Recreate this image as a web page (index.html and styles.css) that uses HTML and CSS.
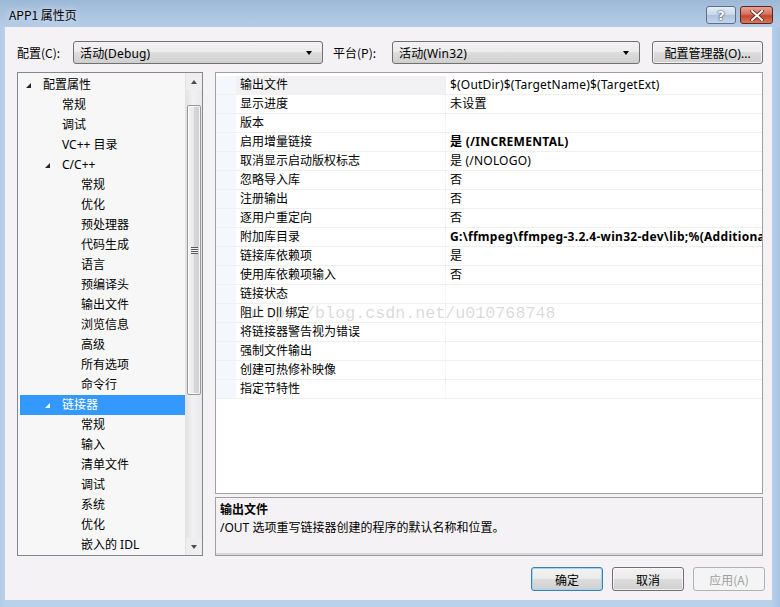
FILE: index.html
```html
<!DOCTYPE html>
<html lang="zh-CN">
<head>
<meta charset="utf-8">
<title>APP1 属性页</title>
<link rel="stylesheet" href="styles.css">
</head>
<body>
<div class="window">
  <div class="titlebar">
    <span class="title">APP1 属性页</span>
    <div class="caption-btns">
      <div class="cbtn help">?</div>
      <div class="cbtn close">
        <svg width="14" height="11" viewBox="0 0 14 11"><path d="M2 1 L12 10 M12 1 L2 10" stroke="#5a1a14" stroke-width="3.4" stroke-linecap="square"/><path d="M2 1 L12 10 M12 1 L2 10" stroke="#ffffff" stroke-width="2" stroke-linecap="square"/></svg>
      </div>
    </div>
  </div>
  <div class="client">
    <div class="toolbar">
      <span class="lbl lbl-cfg">配置(C):</span>
      <div class="combo combo-cfg"><span>活动(Debug)</span><i class="drop"></i></div>
      <span class="lbl lbl-plat">平台(P):</span>
      <div class="combo combo-plat"><span>活动(Win32)</span><i class="drop"></i></div>
      <div class="btn btn-mgr">配置管理器(O)...</div>
    </div>
    <div class="main">
      <div class="tree">
        <div class="tree-list">
          <div class="node l0"><i class="arr"></i>配置属性</div>
          <div class="node l1">常规</div>
          <div class="node l1">调试</div>
          <div class="node l1">VC++ 目录</div>
          <div class="node l1"><i class="arr"></i>C/C++</div>
          <div class="node l2">常规</div>
          <div class="node l2">优化</div>
          <div class="node l2">预处理器</div>
          <div class="node l2">代码生成</div>
          <div class="node l2">语言</div>
          <div class="node l2">预编译头</div>
          <div class="node l2">输出文件</div>
          <div class="node l2">浏览信息</div>
          <div class="node l2">高级</div>
          <div class="node l2">所有选项</div>
          <div class="node l2">命令行</div>
          <div class="node l1 sel"><i class="arr"></i>链接器</div>
          <div class="node l2">常规</div>
          <div class="node l2">输入</div>
          <div class="node l2">清单文件</div>
          <div class="node l2">调试</div>
          <div class="node l2">系统</div>
          <div class="node l2">优化</div>
          <div class="node l2">嵌入的 IDL</div>
        </div>
        <div class="vscroll">
          <div class="sbtn up"><i></i></div>
          <div class="track">
            <div class="pre"></div>
            <div class="thumb"><span class="grip"></span></div>
          </div>
          <div class="sbtn down"><i></i></div>
        </div>
      </div>
      <div class="right">
        <div class="grid">
          <div class="row first"><span class="gut"></span><span class="name">输出文件</span><span class="val">$(OutDir)$(TargetName)$(TargetExt)</span></div>
          <div class="row"><span class="gut"></span><span class="name">显示进度</span><span class="val">未设置</span></div>
          <div class="row"><span class="gut"></span><span class="name">版本</span><span class="val"></span></div>
          <div class="row"><span class="gut"></span><span class="name">启用增量链接</span><span class="val b">是 (/INCREMENTAL)</span></div>
          <div class="row"><span class="gut"></span><span class="name">取消显示启动版权标志</span><span class="val">是 (/NOLOGO)</span></div>
          <div class="row"><span class="gut"></span><span class="name">忽略导入库</span><span class="val">否</span></div>
          <div class="row"><span class="gut"></span><span class="name">注册输出</span><span class="val">否</span></div>
          <div class="row"><span class="gut"></span><span class="name">逐用户重定向</span><span class="val">否</span></div>
          <div class="row"><span class="gut"></span><span class="name">附加库目录</span><span class="val b">G:\ffmpeg\ffmpeg-3.2.4-win32-dev\lib;%(AdditionalLibraryDirectories)</span></div>
          <div class="row"><span class="gut"></span><span class="name">链接库依赖项</span><span class="val">是</span></div>
          <div class="row"><span class="gut"></span><span class="name">使用库依赖项输入</span><span class="val">否</span></div>
          <div class="row"><span class="gut"></span><span class="name">链接状态</span><span class="val"></span></div>
          <div class="row"><span class="gut"></span><span class="name">阻止 Dll 绑定</span><span class="val"></span></div>
          <div class="row"><span class="gut"></span><span class="name">将链接器警告视为错误</span><span class="val"></span></div>
          <div class="row"><span class="gut"></span><span class="name">强制文件输出</span><span class="val"></span></div>
          <div class="row"><span class="gut"></span><span class="name">创建可热修补映像</span><span class="val"></span></div>
          <div class="row"><span class="gut"></span><span class="name">指定节特性</span><span class="val"></span></div>
          <div class="watermark">http://blog.csdn.net/u010768748</div>
        </div>
        <div class="desc">
          <div class="desc-title">输出文件</div>
          <div class="desc-text">/OUT 选项重写链接器创建的程序的默认名称和位置。</div>
        </div>
      </div>
    </div>
    <div class="footer">
      <div class="btn dlg focus">确定</div>
      <div class="btn dlg">取消</div>
      <div class="btn dlg disabled">应用(A)</div>
    </div>
  </div>
</div>
</body>
</html>
```

FILE: styles.css
```css
* { box-sizing: border-box; }
html, body { margin: 0; padding: 0; }
body {
  width: 780px;
  height: 607px;
  overflow: hidden;
  font-family: "Segoe UI", "Noto Sans", "Noto Sans CJK SC", sans-serif;
  font-size: 12px;
  color: #000;
}
.window {
  width: 780px;
  height: 607px;
  background: linear-gradient(to right, #b3cbe7 0px, #bad1ea 6px, #bad1ea 770px, #a9c4e4 780px);
  display: flex;
  flex-direction: column;
}
.titlebar {
  height: 27px;
  flex: none;
  display: flex;
  align-items: flex-start;
  background: linear-gradient(to bottom, #9db8d7 0%, #a8c1de 40%, #b5cce8 100%);
  position: relative;
}
.title {
  font-family: "Noto Sans CJK SC", sans-serif;
  font-size: 12px;
  line-height: 14px;
  padding: 8px 0 0 9px;
  color: #000;
  text-shadow: 0 0 6px rgba(255,255,255,0.9);
}
.caption-btns {
  margin-left: auto;
  margin-right: 7px;
  margin-top: 6px;
  display: flex;
  gap: 4px;
}
.cbtn {
  height: 18px;
  border: 1px solid #5f6f86;
  border-radius: 3px;
  display: flex;
  align-items: center;
  justify-content: center;
}
.help {
  width: 30px;
  background: linear-gradient(to bottom, #e6eef8 0%, #c8d7ea 48%, #aec2dc 52%, #c4d6ec 100%);
  color: #fff;
  font-family: "DejaVu Sans", sans-serif;
  font-weight: bold;
  font-size: 13px;
  text-shadow: 0 0 2px #2a3c58, 0 0 1px #2a3c58;
}
.close {
  width: 33px;
  border-color: #5c2620;
  background: linear-gradient(to bottom, #e8a394 0%, #d4735f 45%, #c0472d 55%, #d6795c 100%);
}
.client {
  flex: none;
  margin-left: 5px;
  width: 767px;
  height: 573px;
  background: #f5f2f5;
  display: flex;
  flex-direction: column;
}
.toolbar {
  display: flex;
  align-items: center;
  height: 23px;
  margin-top: 14px;
  padding-left: 12px;
}
.lbl {
  font-family: "Noto Sans CJK SC", sans-serif;
  font-size: 12px;
  flex: none;
}
.lbl-cfg { width: 56px; }
.lbl-plat { width: 59px; margin-left: 10px; }
.combo {
  height: 23px;
  border: 1px solid #707070;
  border-radius: 3px;
  background: linear-gradient(to bottom, #f2f2f2 0%, #ebebeb 50%, #dddddd 50%, #cfcfcf 100%);
  display: flex;
  align-items: center;
  padding-left: 6px;
  position: relative;
  font-size: 12px;
}
.combo span { font-family: "Noto Sans", "Noto Sans CJK SC", sans-serif; letter-spacing: 0.15px; }
.combo-cfg { width: 250px; }
.combo-plat { width: 248px; }
.drop {
  position: absolute;
  right: 10px;
  top: 9px;
  width: 0;
  height: 0;
  border-left: 3.5px solid transparent;
  border-right: 3.5px solid transparent;
  border-top: 4px solid #000;
}
.btn {
  height: 24px;
  border: 1px solid #707070;
  border-radius: 3px;
  background: linear-gradient(to bottom, #f2f2f2 0%, #ebebeb 50%, #dddddd 50%, #cfcfcf 100%);
  display: flex;
  align-items: center;
  justify-content: center;
  font-size: 12px;
  box-shadow: inset 0 0 0 1px rgba(255,255,255,0.7);
}
.btn-mgr {
  width: 111px;
  height: 23px;
  margin-left: 12px;
}
.main {
  display: flex;
  margin-top: 8px;
  padding-left: 12px;
  height: 484px;
}
.tree {
  width: 186px;
  height: 484px;
  border: 1px solid #828790;
  background: #f7f7f7;
  display: flex;
  flex: none;
}
.tree-list {
  flex: 1;
  padding-top: 2px;
  overflow: hidden;
}
.node {
  height: 20px;
  line-height: 20px;
  margin-left: 2px;
  position: relative;
  font-family: "Noto Sans", "Noto Sans CJK SC", sans-serif;
  font-size: 12px;
  white-space: nowrap;
}
.node.l0 { padding-left: 23px; }
.node.l1 { padding-left: 42px; }
.node.l2 { padding-left: 61px; }
.arr {
  position: absolute;
  top: 8px;
  width: 0;
  height: 0;
  border-left: 5px solid transparent;
  border-bottom: 5px solid #262626;
}
.l0 .arr { left: 6px; }
.l1 .arr { left: 25px; }
.node.sel {
  background: #3399ff;
  color: #fff;
}
.node.sel .arr { border-bottom-color: #fff; }
.vscroll {
  width: 17px;
  flex: none;
  display: flex;
  flex-direction: column;
  background: #eeeeee;
  border-left: 1px solid #e2e2e2;
}
.sbtn {
  height: 17px;
  flex: none;
  display: flex;
  align-items: center;
  justify-content: center;
}
.sbtn i {
  width: 0;
  height: 0;
  border-left: 3.5px solid transparent;
  border-right: 3.5px solid transparent;
}
.sbtn.up i { border-bottom: 4px solid #4d4d4d; }
.sbtn.down i { border-top: 4px solid #4d4d4d; }
.track {
  flex: 1;
  display: flex;
  flex-direction: column;
  background: linear-gradient(to right, #e3e3e3, #f0f0f0 40%, #f0f0f0 60%, #e8e8e8);
}
.pre { height: 15px; flex: none; }
.thumb {
  height: 290px;
  flex: none;
  margin: 0 1px;
  border: 1px solid #979797;
  border-radius: 2px;
  background: linear-gradient(to right, #f3f3f3 0%, #e9e9e9 50%, #d6d6d6 51%, #d0d0d0 100%);
  box-shadow: inset 0 0 0 1px rgba(255,255,255,0.8);
  display: flex;
  align-items: center;
  justify-content: center;
}
.grip {
  width: 7px;
  height: 7px;
  background: repeating-linear-gradient(to bottom, #595959 0px, #595959 1px, #f0f0f0 1px, #f0f0f0 2px);
}
.right {
  margin-left: 12px;
  width: 548px;
  display: flex;
  flex-direction: column;
  flex: none;
}
.grid {
  height: 422px;
  border: 1px solid #a0a0a0;
  background: #fff;
  padding-top: 3px;
  position: relative;
  overflow: hidden;
  flex: none;
}
.row {
  display: flex;
  height: 19px;
  border-bottom: 1px solid #f0f0f0;
  font-family: "Noto Sans", "Noto Sans CJK SC", sans-serif;
  font-size: 12px;
  line-height: 18px;
  white-space: nowrap;
}
.gut {
  width: 20px;
  flex: none;
  background: #f5f7ff;
}
.name {
  width: 210px;
  flex: none;
  padding-left: 4px;
  border-right: 1px dotted #ececec;
}
.row.first .name { background: #f2f2f4; }
.val {
  flex: 1;
  padding-left: 4px;
  overflow: hidden;
  letter-spacing: 0.2px;
}
.val.b { font-weight: bold; letter-spacing: 0.3px; }
.watermark {
  position: absolute;
  left: 29px;
  top: 231px;
  font-family: "Liberation Mono", monospace;
  font-size: 16.7px;
  color: rgba(120,120,120,0.28);
  pointer-events: none;
  white-space: nowrap;
}
.desc {
  margin-top: 3px;
  height: 60px;
  border: 1px solid #a0a0a0;
  border-bottom-color: #9a9a9a;
  box-shadow: inset 0 -2px 0 #d8d8d8;
  background: #f5f2f5;
  padding: 3px 0 0 4px;
  font-family: "Noto Sans", "Noto Sans CJK SC", sans-serif;
  font-size: 12px;
}
.desc-title {
  font-weight: bold;
  line-height: 18px;
}
.desc-text {
  line-height: 18px;
}
.footer {
  display: flex;
  justify-content: flex-end;
  gap: 9px;
  margin-top: 11px;
  padding-right: 7px;
}
.btn.dlg {
  width: 72px;
  height: 24px;
  font-family: "Noto Sans CJK SC", sans-serif;
}
.btn.focus {
  border-color: #3c7fb1;
  box-shadow: inset 0 0 0 1px #9fd7f5;
}
.btn.disabled {
  border-color: #adb2b5;
  background: #f4f4f4;
  color: #a0a0a0;
  box-shadow: none;
}
```
